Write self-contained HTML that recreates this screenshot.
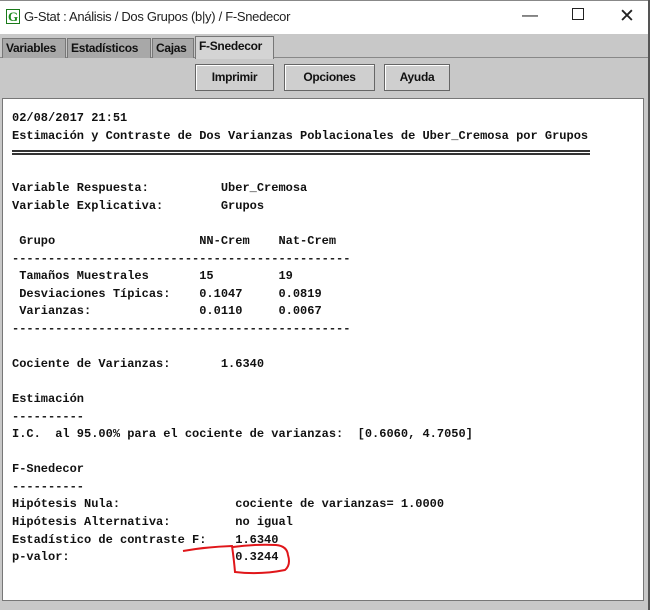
<!DOCTYPE html>
<html><head><meta charset="utf-8"><style>
*{margin:0;padding:0;box-sizing:border-box}
body{width:650px;height:610px;overflow:hidden;background:#c8c8c8;position:relative;font-family:"Liberation Sans",sans-serif}
.title{position:absolute;left:0;top:0;width:650px;height:34px;background:#fff;border-top:1px solid #888}
.title .t{position:absolute;left:24px;top:8px;font-size:13px;color:#222;letter-spacing:-0.3px}
.gicon{position:absolute;left:6px;top:8px;width:14px;height:15px;border:1px solid #1a7a1a;color:#1a8a1a;font:bold 13px "Liberation Serif",serif;text-align:center;line-height:13px}
.ctl{position:absolute;top:6px;font-size:16px;color:#222}
.tabs{position:absolute;top:36px;left:0;width:650px;height:22px;background:#c8c8c8;border-bottom:1px solid #888}
.tab{position:absolute;top:2px;height:20px;background:#a8a8a8;border:1px solid #777;border-bottom:none;font:bold 12px "Liberation Sans",sans-serif;letter-spacing:-0.3px;padding:2px 3px;color:#111}
.tab.a{background:#d4d4d4;top:0;height:23px}
.btn{position:absolute;top:64px;height:27px;border:1px solid #666;background:#cfcfcf;box-shadow:inset 1px 1px 0 #fff;font:bold 12px "Liberation Sans",sans-serif;text-align:center;line-height:25px;color:#111;letter-spacing:-0.3px}
.area{position:absolute;left:2px;top:98px;width:642px;height:503px;background:#fff;border:1px solid #777}
pre{position:absolute;left:12px;top:110px;font:bold 12px "Liberation Mono",monospace;line-height:17.56px;color:#111}
.dbl{position:absolute;left:12px;top:150px;width:578px;height:5px;border-top:2px solid #333;border-bottom:2px solid #333}
.rb{position:absolute;right:0;top:0;width:2px;height:610px;background:#555}
</style></head><body>
<div class="title"><div class="gicon">G</div><div class="t">G-Stat : Análisis / Dos Grupos (b|y) / F-Snedecor</div>
<div class="ctl" style="left:522px">&#8212;</div><div class="ctl" style="left:572px;top:7px;width:12px;height:12px;border:1px solid #222"></div><div class="ctl" style="left:619px;top:4px;font-size:19px">&#10005;</div></div>
<div class="tabs">
<div class="tab" style="left:2px;width:64px">Variables</div>
<div class="tab" style="left:67px;width:84px">Estadísticos</div>
<div class="tab" style="left:152px;width:42px">Cajas</div>
<div class="tab a" style="left:195px;width:79px">F-Snedecor</div>
</div>
<div class="btn" style="left:195px;width:79px">Imprimir</div>
<div class="btn" style="left:284px;width:91px">Opciones</div>
<div class="btn" style="left:384px;width:66px">Ayuda</div>
<div class="area"></div>
<div class="dbl"></div>
<pre>02/08/2017 21:51
Estimación y Contraste de Dos Varianzas Poblacionales de Uber_Cremosa por Grupos


Variable Respuesta:          Uber_Cremosa
Variable Explicativa:        Grupos

 Grupo                    NN-Crem    Nat-Crem
-----------------------------------------------
 Tamaños Muestrales       15         19
 Desviaciones Típicas:    0.1047     0.0819
 Varianzas:               0.0110     0.0067
-----------------------------------------------

Cociente de Varianzas:       1.6340

Estimación
----------
I.C.  al 95.00% para el cociente de varianzas:  [0.6060, 4.7050]

F-Snedecor
----------
Hipótesis Nula:                cociente de varianzas= 1.0000
Hipótesis Alternativa:         no igual
Estadístico de contraste F:    1.6340
p-valor:                       0.3244</pre>
<svg style="position:absolute;left:0;top:0" width="650" height="610"><path d="M183 551 Q205 547 232 546 Q234 560 235 572 Q260 575 285 570 Q291 565 288 555 Q287 546 276 545 Q255 544 233 547" fill="none" stroke="#e0161a" stroke-width="2"/></svg>
<div class="rb"></div>
</body></html>
